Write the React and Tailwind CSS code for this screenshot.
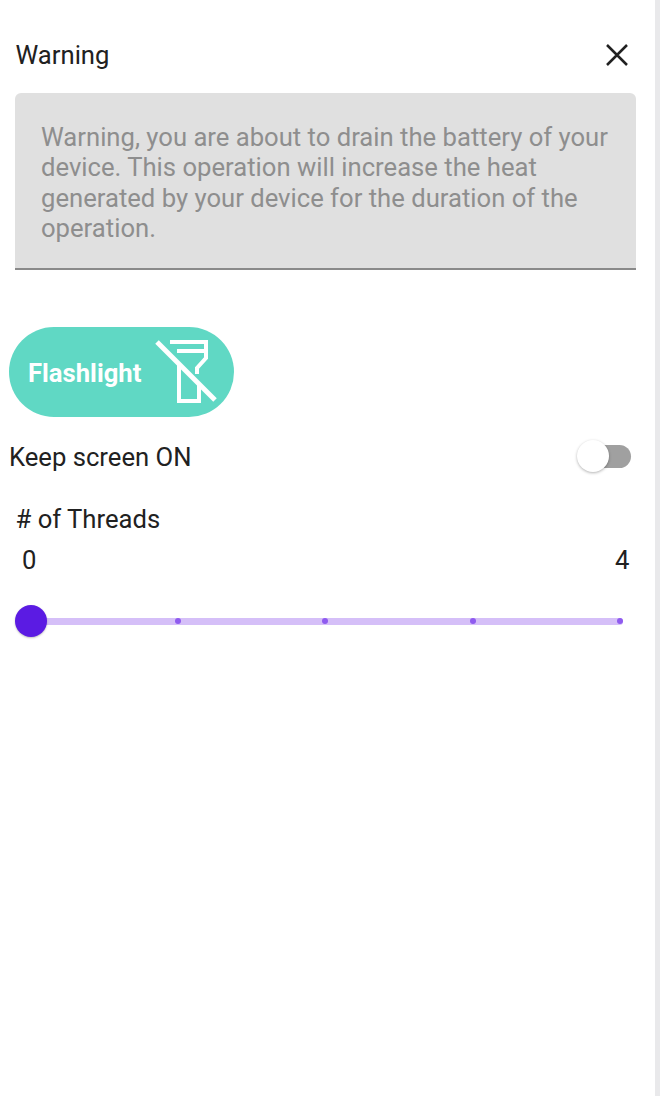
const font = { fontFamily: "Roboto, sans-serif" };

function FlashlightOff() {
  return (
    <svg width="66" height="66" viewBox="0 0 66 66" fill="none" stroke="white" strokeWidth="4" className="shrink-0">
      <path d="M17 3 H53 V19 L44 29 V35" />
      <path d="M24 12 H52" />
      <path d="M26 26 V62 H46 V45" />
      <path d="M4 3 L62 61" strokeWidth="5" />
    </svg>
  );
}

function Mark() {
  return <span className="w-[6px] h-[6px] rounded-full bg-[#8f5bef]" />;
}

export default function App() {
  return (
    <div className="relative w-[660px] h-[1096px] bg-white overflow-hidden text-[#212121]" style={font}>
      <div className="absolute right-0 top-0 bottom-0 w-[5px] bg-[#e9e9eb]" />
      <div className="w-[655px] pt-[38px] flex flex-col">
        <div className="flex items-center justify-between pl-[15.500px] pr-[26px] h-[34px]">
          <span className="text-[25.650px] leading-[34px]">Warning</span>
          <svg width="24" height="24" viewBox="0 0 24 24" stroke="#212121" strokeWidth="2.500" fill="none">
            <path d="M2 2 L22 22 M22 2 L2 22" />
          </svg>
        </div>
        <div className="mt-[21px] ml-[15px] mr-[19px] h-[177px] rounded-t-[6px] bg-[#e0e0e0] border-b-2 border-[#8a8a8a] pt-[29px] pl-[26px] pr-[16px]">
          <p className="text-[25.650px] leading-[30.300px] text-[#8e8e8e] whitespace-nowrap">
            Warning, you are about to drain the battery of your<br />
            device. This operation will increase the heat<br />
            generated by your device for the duration of the<br />
            operation.
          </p>
        </div>
        <div className="mt-[57px] ml-[9px] w-[225px] h-[90px] rounded-full bg-[#60d8c4] flex items-center justify-between pl-[19px] pr-[15px]">
          <span className="text-white font-bold text-[25.650px] leading-[30px] mt-[2px]">Flashlight</span>
          <FlashlightOff />
        </div>
        <div className="mt-[19px] flex items-center justify-between pl-[9px] pr-[24px] h-[42px]">
          <span className="text-[25.650px]">Keep screen ON</span>
          <div className="relative w-[54px] h-[23px] flex items-center mt-[-2px]">
            <div className="ml-[16px] w-[38px] h-[23px] rounded-full bg-[#a0a0a0]" />
            <div className="absolute left-0 top-[-5px] w-[32px] h-[32px] rounded-full bg-white shadow-[0_1px_3px_rgba(0,0,0,0.3)]" />
          </div>
        </div>
        <div className="mt-[26px] pl-[15.500px] text-[25.650px] leading-[30px]">
          # of Threads
        </div>
        <div className="mt-[11px] flex justify-between pl-[22px] pr-[25.500px] text-[25.650px] leading-[30px]">
          <span>0</span>
          <span>4</span>
        </div>
        <div className="relative mt-[30px] ml-[15px] w-[608px] h-[32px] flex items-center">
          <div className="ml-[16px] flex-1 h-[7px] rounded-r-full bg-[#d5bff8] flex items-center justify-between pl-[144px]">
            <Mark />
            <Mark />
            <Mark />
            <Mark />
          </div>
          <div className="absolute left-0 top-0 w-[32px] h-[32px] rounded-full bg-[#5b1be3] shadow-[0_1px_2px_rgba(0,0,0,0.25)]" />
        </div>
      </div>
    </div>
  );
}
